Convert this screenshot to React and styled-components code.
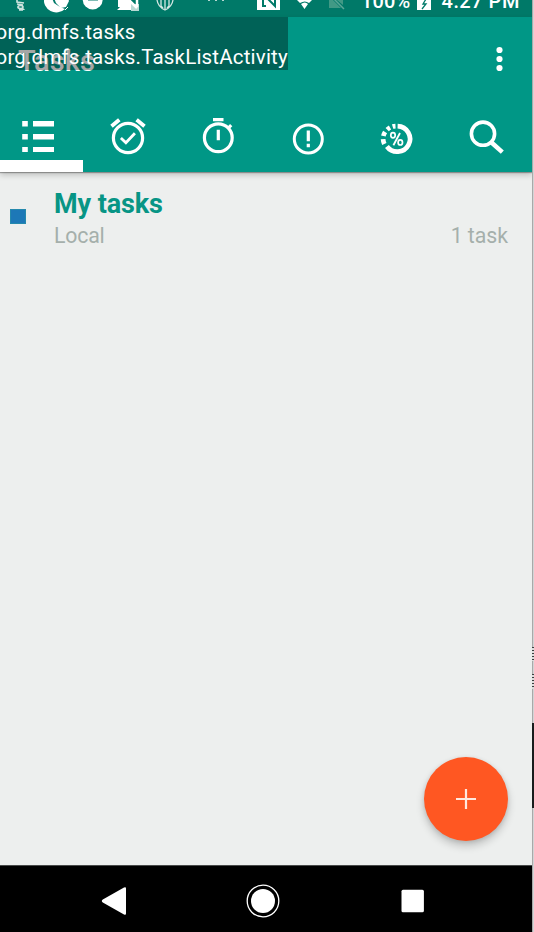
import React from "react";
import styled, { createGlobalStyle } from "styled-components";

const GlobalStyle = createGlobalStyle`
  * { box-sizing: border-box; }
  html, body { margin: 0; padding: 0; overflow: hidden; }
  body { font-family: Roboto, "Open Sans", sans-serif; background: #ccc; }
  svg { display: block; flex: none; }
`;

const Page = styled.div`
  display: flex;
  width: 534px;
  height: 932px;
  overflow: hidden;
`;

const Screen = styled.main`
  position: relative;
  display: flex;
  flex-direction: column;
  width: 532px;
  height: 932px;
  overflow: hidden;
  background: #edefee;
`;

const Edge = styled.aside`
  display: flex;
  flex-direction: column;
  width: 2px;
  border-left: 1px solid #a9a9a9;
  background: #d3d4d5;
`;

const EdgeMark = styled.i`
  flex: none;
  width: 2px;
  margin: ${(p) => p.$gap}px 0 0 -1px;
  height: ${(p) => p.$height}px;
  background: ${(p) => p.$fill};
`;

const stripes = "repeating-linear-gradient(#3c4040 0 1px, #dcdcdc 1px 3px)";

const StatusBar = styled.div`
  display: flex;
  flex: none;
  height: 17px;
  overflow: hidden;
  background: #007968;
  color: #fff;
`;

const StatusIcon = styled.svg.attrs({ height: 17, fill: "none" })`
  margin-left: ${(p) => p.$gap}px;
`;

const StatusText = styled.span`
  flex: none;
  width: ${(p) => p.$width}px;
  margin: -11px 0 0 ${(p) => p.$gap}px;
  font-size: 20px;
  font-weight: 500;
  line-height: 24px;
  letter-spacing: ${(p) => p.$spacing}px;
  white-space: nowrap;
`;

const AppBar = styled.header`
  display: flex;
  flex: none;
  flex-direction: column;
  height: 155px;
  background: #009786;
  box-shadow: 0 1px 1px rgba(0, 0, 0, 0.3), 0 3px 6px rgba(0, 0, 0, 0.2);
  z-index: 1;
`;

const TitleRow = styled.div`
  display: flex;
  align-items: center;
  justify-content: space-between;
  height: 84px;
  padding: 0 29.5px 0 18px;
`;

const Title = styled.h1`
  margin: 3px 0 0;
  color: #fff;
  font-size: 29px;
  font-weight: 500;
  line-height: 34px;
  letter-spacing: 0.15px;
`;

const Tabs = styled.nav`
  display: grid;
  grid-template-columns: repeat(6, 89.7px);
  height: 71px;
  margin-left: -6.4px;
`;

const Tab = styled.button`
  display: flex;
  justify-content: center;
  padding: 12px 0 0;
  border: 0;
  border-bottom: 12px solid ${(p) => (p.$active ? "#fff" : "transparent")};
  background: none;
  color: #fff;
`;

const DebugOverlay = styled.div`
  position: absolute;
  top: 17px;
  left: 0;
  z-index: 2;
  width: 288px;
  height: 53px;
  padding-top: 3px;
  overflow: hidden;
  background: rgba(0, 0, 0, 0.35);
  color: #fff;
`;

const DebugLine = styled.div`
  margin-left: -4.5px;
  font-size: 20.5px;
  line-height: 24.5px;
  letter-spacing: 0.19px;
  white-space: nowrap;
`;

const Content = styled.section`
  flex: 1;
`;

const ListRow = styled.article`
  display: grid;
  grid-template-columns: 44px 1fr auto;
  height: 88px;
  padding: 14px 24px 0 10px;
`;

const ColorMark = styled.i`
  width: 16px;
  height: 15px;
  margin-top: 23px;
  background: #1d78b7;
  border: 1px solid #2589ad;
`;

const ListName = styled.h2`
  margin: 0;
  color: #079585;
  font-size: 27px;
  font-weight: 700;
  line-height: 36px;
  letter-spacing: -0.1px;
`;

const Caption = styled.p`
  align-self: start;
  margin: ${(p) => (p.$count ? 36 : 0)}px 0 0;
  color: #a5afab;
  font-size: 21.3px;
  line-height: 28px;
  letter-spacing: ${(p) => (p.$count ? -0.05 : -0.2)}px;
`;

const AddButton = styled.button`
  position: absolute;
  right: 24px;
  bottom: 91px;
  display: grid;
  place-items: center;
  width: 84px;
  height: 84px;
  padding: 0;
  border: 0;
  border-radius: 50%;
  background: #ff5722;
  box-shadow: 0 5px 9px rgba(0, 0, 0, 0.2), 0 1px 4px rgba(0, 0, 0, 0.1);
`;

const NavigationBar = styled.footer`
  display: grid;
  grid-template-columns: repeat(3, 149.5px);
  flex: none;
  justify-content: center;
  align-items: center;
  justify-items: center;
  height: 67px;
  padding: 4px 6px 0 0;
  border-top: 1px solid #484a49;
  background: #000;
`;

const TabIcon = ({ children }) => (
  <svg width="42" height="42" viewBox="0 0 42 42" fill="none" stroke="currentColor" strokeWidth="3.2">
    {children}
  </svg>
);

const ListIcon = () => (
  <TabIcon>
    <path
      d="M5.2 8h5.6v5.5H5.2zM5.2 21h5.6v5.5H5.2zM5.2 34h5.6v5H5.2zM16 8h21v5.5H16zM16 21h21v5.5H16zM16 34h21v5H16z"
      fill="currentColor"
      stroke="none"
    />
  </TabIcon>
);

const AlarmIcon = () => (
  <TabIcon>
    <circle cx="21" cy="25" r="14.6" />
    <path d="M4.5 13.3 12.3 6.7M29.6 6.7 37.5 13.3" strokeWidth="3.8" />
    <path d="m13.9 25 5 4.8 9-9.5" strokeWidth="2.8" />
  </TabIcon>
);

const TimerIcon = () => (
  <TabIcon>
    <circle cx="21.3" cy="24.8" r="13.9" />
    <path d="M16 6.7h10.5M31.2 15.2l3-3M21.3 16.7v10.5" />
  </TabIcon>
);

const PriorityIcon = () => (
  <TabIcon>
    <circle cx="21.3" cy="26" r="14" strokeWidth="3" />
    <path d="M21.3 17.5v10.8M21.3 30.8v3.5" />
  </TabIcon>
);

const ProgressIcon = () => (
  <TabIcon>
    <path
      d="M21.6 13.1A12.8 12.8 0 1 1 10.9 33.5M8.3 31a13 13 0 0 1-1.2-4.8M7.4 23A13 13 0 0 1 9.1 19M11.2 16.6a13 13 0 0 1 2.8-2.1M16.6 13.6a13 13 0 0 1 2.9-.5"
      strokeWidth="4.7"
    />
    <path d="m24 20-6.6 12.2" strokeWidth="1.8" />
    <ellipse cx="17" cy="22.3" rx="2.2" ry="2.6" strokeWidth="1.7" />
    <ellipse cx="24.3" cy="29.4" rx="2.2" ry="2.6" strokeWidth="1.7" />
  </TabIcon>
);

const SearchIcon = () => (
  <TabIcon>
    <circle cx="17" cy="20.7" r="11.6" strokeWidth="3.6" />
    <path d="m25.5 29.5 10.8 9.7" strokeWidth="4.5" />
  </TabIcon>
);

const tabs = [ListIcon, AlarmIcon, TimerIcon, PriorityIcon, ProgressIcon, SearchIcon];

function StatusIcons() {
  return (
    <>
      <StatusIcon $gap={15} width="11" stroke="#cce4df" strokeWidth="1.6">
        <path d="M2 0v2l7 1M2 4l6 1M3 7c0-2 5-2 5 0S3 9 3 7c-1 2 6 1 6 3M8 10H4" />
      </StatusIcon>
      <StatusIcon $gap={18} width="27">
        <path d="M0-2A12.5 12.5 0 0 0 21 9L16 7 10 3 8-2zM10-2 12 3 17 8 22 7 25 1 24-2z" fill="#fff" />
        <path d="m21 10 3-3" stroke="#fff" />
      </StatusIcon>
      <StatusIcon $gap={11} width="22">
        <circle cx="10.7" cy="-.5" r="10" fill="#fff" />
        <path d="M6 0h10" stroke="#00796b" strokeWidth="1" />
      </StatusIcon>
      <StatusIcon $gap={13} width="23">
        <path d="M1 0h13v10H0l3-3H1z" fill="#fff" />
        <path d="M14 4h8v7h-8z" fill="#b9d9d4" />
        <path d="m12 0 8 8M20 0v7" stroke="#fff" strokeWidth="2.5" />
      </StatusIcon>
      <StatusIcon $gap={16} width="18" stroke="#d5e8e4" strokeWidth="1.3">
        <path d="M1 0q1 7 8 10Q16 7 17 0M5 0v6l2 2M9 0v9M13 0v6l-2 2" />
      </StatusIcon>
      <StatusIcon $gap={33} width="20">
        <path d="M1 0h2v1H1zM8 0h2v1H8zM15 0h2v1h-2z" fill="#b5d8d1" />
      </StatusIcon>
      <StatusIcon $gap={30} width="24">
        <path d="M0-3h23v13H0z" fill="#fff" />
        <path d="M6 0v6h3M10-2l8 8V0" stroke="#007968" strokeWidth="2" />
      </StatusIcon>
      <StatusIcon $gap={15} width="18">
        <path d="M1 0q8-5 15 0l-3 3q-4-3-9 0zM5 4q4-3 7 0L8.5 9z" fill="#fff" />
      </StatusIcon>
      <StatusIcon $gap={14} width="19">
        <path d="M1-6v14h12L1-4M4-4h11v9z" fill="#419985" />
        <path d="m4-3 12 12" stroke="#5aa797" strokeWidth="1.5" />
      </StatusIcon>
    </>
  );
}

export default function App() {
  return (
    <Page>
      <GlobalStyle />
      <Screen>
        <StatusBar>
          <StatusIcons />
          <StatusText $gap={14} $width={49} $spacing={0.1}>100%</StatusText>
          <StatusIcon $gap={7} width="16">
            <path d="M0-2h14v12H0z" fill="#fff" />
            <path d="M9-1 6 4h3L5 9" stroke="#007968" strokeWidth="1.3" />
          </StatusIcon>
          <StatusText $gap={8.5} $width={82} $spacing={0.55}>4:27 PM</StatusText>
        </StatusBar>
        <AppBar>
          <TitleRow>
            <Title>Tasks</Title>
            <svg width="7" height="26" viewBox="0 0 7 26" fill="#fff">
              <circle cx="3.5" cy="4" r="3.1" />
              <circle cx="3.5" cy="13" r="3.1" />
              <circle cx="3.5" cy="22" r="3.1" />
            </svg>
          </TitleRow>
          <Tabs>
            {tabs.map((Icon, index) => (
              <Tab key={index} $active={index === 0}>
                <Icon />
              </Tab>
            ))}
          </Tabs>
        </AppBar>
        <DebugOverlay>
          <DebugLine>org.dmfs.tasks</DebugLine>
          <DebugLine>org.dmfs.tasks.TaskListActivity</DebugLine>
        </DebugOverlay>
        <Content>
          <ListRow>
            <ColorMark />
            <div>
              <ListName>My tasks</ListName>
              <Caption>Local</Caption>
            </div>
            <Caption $count>1 task</Caption>
          </ListRow>
        </Content>
        <AddButton>
          <svg width="22" height="22" viewBox="0 0 22 22" stroke="#ffe8df" strokeWidth="2.2">
            <path d="M11 1v20M1 11h20" />
          </svg>
        </AddButton>
        <NavigationBar>
          <svg width="26" height="30" viewBox="0 0 26 30" fill="#fff">
            <path d="M1.8 13.6 23 1.5q2-1 2 1v25q0 2-2 1L1.8 16.4q-2-1.4 0-2.8z" />
          </svg>
          <svg width="34" height="34" viewBox="0 0 34 34">
            <circle cx="17" cy="17" r="15.8" fill="none" stroke="#fff" strokeWidth="1.3" />
            <circle cx="17" cy="17" r="12" fill="#fff" />
          </svg>
          <svg width="24" height="24" viewBox="0 0 24 24" fill="#fff">
            <rect x=".5" y=".8" width="22.4" height="22.4" rx="1.5" />
          </svg>
        </NavigationBar>
      </Screen>
      <Edge>
        <EdgeMark $gap={647} $height={14} $fill={stripes} />
        <EdgeMark $gap={13} $height={15} $fill={stripes} />
        <EdgeMark $gap={34} $height={85} $fill="#191c1c" />
      </Edge>
    </Page>
  );
}
